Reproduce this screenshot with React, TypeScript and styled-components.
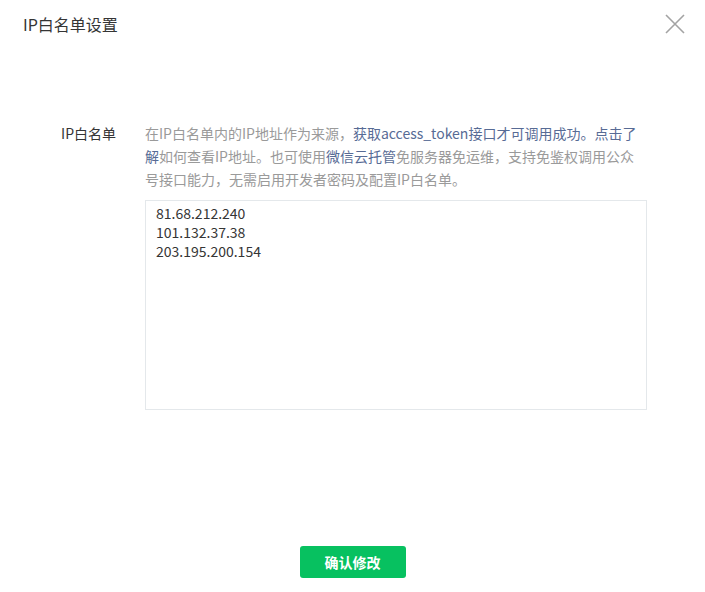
import { createGlobalStyle } from 'styled-components';
import styled from 'styled-components';

const IP_LIST = ['81.68.212.240', '101.132.37.38', '203.195.200.154'];

export default function App() {
  return (
    <>
      <GlobalStyle />
      <Dialog>
        <Header>
          <Title>IP白名单设置</Title>
          <Close aria-label="关闭">
            <svg width="20" height="20" viewBox="0 0 20 20">
              <path d="M1 1L19 19M19 1L1 19" stroke="#a3a3a3" strokeWidth="1.6" fill="none" />
            </svg>
          </Close>
        </Header>
        <Body>
          <FormRow>
            <Label>IP白名单</Label>
            <Field>
              <Desc>
                在IP白名单内的IP地址作为来源，<Link>获取access_token接口才可调用成功。点击了解</Link>
                如何查看IP地址。也可使用<Link>微信云托管</Link>
                免服务器免运维，支持免鉴权调用公众号接口能力，无需启用开发者密码及配置IP白名单。
              </Desc>
              <IpArea defaultValue={IP_LIST.join('\n')} spellCheck={false} />
            </Field>
          </FormRow>
        </Body>
        <Footer>
          <PrimaryButton>确认修改</PrimaryButton>
        </Footer>
      </Dialog>
    </>
  );
}

const GlobalStyle = createGlobalStyle`
  body {
    margin: 0;
    background: #fff;
    font-family: "Microsoft YaHei", "Noto Sans CJK SC", "Noto Sans", sans-serif;
  }
`;

const Dialog = styled.div`
  width: 705px;
  height: 592px;
  display: flex;
  flex-direction: column;
  background: #fff;
`;

const Header = styled.div`
  display: flex;
  align-items: center;
  justify-content: space-between;
  height: 48px;
  padding: 0 20px 0 23px;
`;

const Title = styled.h3`
  margin: 0;
  font-size: 16px;
  font-weight: 400;
  color: #353535;
`;

const Close = styled.button`
  border: 0;
  background: none;
  padding: 0;
  width: 20px;
  height: 20px;
  cursor: pointer;
  display: flex;
`;

const Body = styled.div`
  flex: 1;
  padding-top: 74px;
`;

const FormRow = styled.div`
  display: flex;
  align-items: flex-start;
`;

const Label = styled.label`
  width: 116px;
  text-align: right;
  padding-right: 29px;
  font-size: 14px;
  line-height: 23px;
  color: #353535;
`;

const Field = styled.div`
  width: 502px;
`;

const Desc = styled.p`
  margin: 0 0 9px;
  width: 497px;
  font-size: 14px;
  line-height: 23px;
  color: #9a9a9a;
`;

const Link = styled.a`
  color: #576b95;
  text-decoration: none;
`;

const IpArea = styled.textarea`
  display: block;
  box-sizing: border-box;
  width: 502px;
  height: 210px;
  padding: 3px 10px;
  border: 1px solid #e4e8eb;
  resize: none;
  outline: none;
  font-family: inherit;
  font-size: 14px;
  line-height: 19px;
  color: #353535;
`;

const Footer = styled.div`
  display: flex;
  justify-content: center;
  padding-bottom: 14px;
`;

const PrimaryButton = styled.button`
  width: 106px;
  height: 32px;
  border: 0;
  border-radius: 3px;
  background: #07c160;
  color: #fff;
  font-family: inherit;
  font-size: 14px;
  font-weight: 700;
  cursor: pointer;
`;
